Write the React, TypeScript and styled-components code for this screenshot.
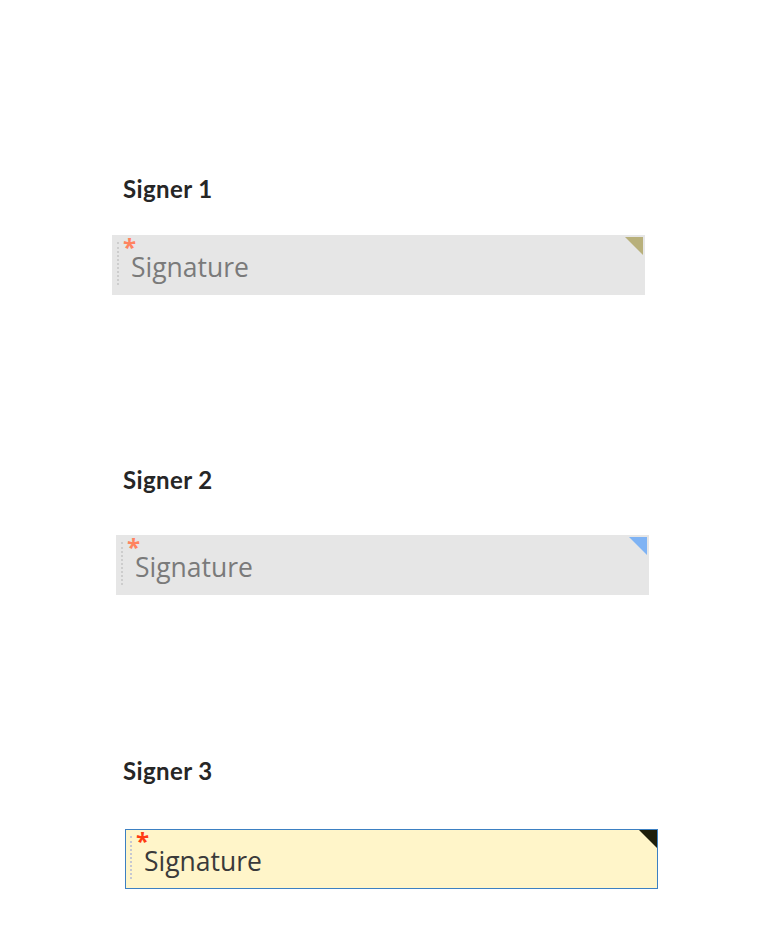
import styled, { createGlobalStyle } from "styled-components";

type Variant = "idle" | "hover" | "active";

interface Look {
  background: string;
  border: string;
  corner: string;
  cornerInset: number;
  text: string;
  star: string;
  rule: string;
}

const looks: Record<Variant, Look> = {
  idle: {
    background: "#e6e6e6",
    border: "transparent",
    corner: "#b8b07b",
    cornerInset: 1,
    text: "#7a7a7a",
    star: "#ff8360",
    rule: "#cdcdcd",
  },
  hover: {
    background: "#e6e6e6",
    border: "transparent",
    corner: "#7fb3f4",
    cornerInset: 1,
    text: "#7a7a7a",
    star: "#ff8360",
    rule: "#cdcdcd",
  },
  active: {
    background: "#fff5c9",
    border: "#3d80c2",
    corner: "#1e1e0b",
    cornerInset: 0,
    text: "#3a3a3a",
    star: "#ff3c12",
    rule: "#c6c8d2",
  },
};

interface Signer {
  name: string;
  variant: Variant;
  top: number;
  gap: number;
  indent: number;
}

const signers: Signer[] = [
  { name: "Signer 1", variant: "idle", top: 175, gap: 32, indent: 112 },
  { name: "Signer 2", variant: "hover", top: 171, gap: 41, indent: 116 },
  { name: "Signer 3", variant: "active", top: 162, gap: 44, indent: 125 },
];

export default function App() {
  return (
    <>
      <GlobalStyle />
      <Page>
        {signers.map((s) => (
          <Field key={s.name} $top={s.top}>
            <Label>{s.name}</Label>
            <SignatureBox $look={looks[s.variant]} $gap={s.gap} $indent={s.indent}>
              <Rule $look={looks[s.variant]} />
              <Star $look={looks[s.variant]}>*</Star>
              <Placeholder $look={looks[s.variant]}>Signature</Placeholder>
              <Corner $look={looks[s.variant]} />
            </SignatureBox>
          </Field>
        ))}
      </Page>
    </>
  );
}

const GlobalStyle = createGlobalStyle`
  html, body {
    margin: 0;
    padding: 0;
    background: #ffffff;
  }
`;

const Page = styled.div`
  width: 772px;
  min-height: 946px;
  display: flex;
  flex-direction: column;
`;

const Field = styled.section<{ $top: number }>`
  display: flex;
  flex-direction: column;
  margin-top: ${(p) => p.$top}px;
`;

const Label = styled.div`
  padding-left: 123px;
  font-family: Lato, "Open Sans", sans-serif;
  font-weight: 700;
  font-size: 24px;
  line-height: 28px;
  letter-spacing: 0.4px;
  color: #262626;
`;

const SignatureBox = styled.div<{ $look: Look; $gap: number; $indent: number }>`
  position: relative;
  box-sizing: border-box;
  display: flex;
  align-items: flex-start;
  width: 533px;
  height: 60px;
  margin-top: ${(p) => p.$gap}px;
  margin-left: ${(p) => p.$indent}px;
  padding-left: 4px;
  background: ${(p) => p.$look.background};
  border: 1px solid ${(p) => p.$look.border};
`;

const Rule = styled.div<{ $look: Look }>`
  width: 0;
  height: 43px;
  margin-top: 6px;
  border-left: 2px dotted ${(p) => p.$look.rule};
`;

const Star = styled.span<{ $look: Look }>`
  width: 8px;
  margin-top: 4px;
  margin-left: 4px;
  font-family: "Open Sans", sans-serif;
  font-weight: 700;
  font-size: 24px;
  line-height: 14px;
  color: ${(p) => p.$look.star};
`;

const Placeholder = styled.span<{ $look: Look }>`
  margin-top: 19px;
  font-family: "Open Sans", sans-serif;
  font-size: 26.5px;
  line-height: 24px;
  color: ${(p) => p.$look.text};
`;

const Corner = styled.div<{ $look: Look }>`
  position: absolute;
  top: ${(p) => p.$look.cornerInset}px;
  right: ${(p) => p.$look.cornerInset}px;
  width: 18px;
  height: 18px;
  background: ${(p) => p.$look.corner};
  clip-path: polygon(0 0, 100% 0, 100% 100%);
`;
